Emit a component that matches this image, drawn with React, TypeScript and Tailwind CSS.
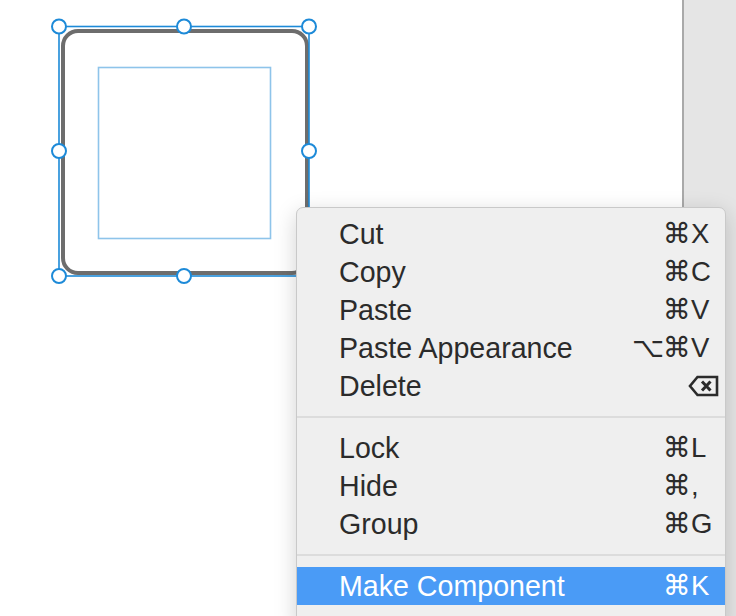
import React from "react";

type Item = { label: string; mod?: string; key?: string; del?: boolean; active?: boolean };

const groups: Item[][] = [
  [
    { label: "Cut", key: "X" },
    { label: "Copy", key: "C" },
    { label: "Paste", key: "V" },
    { label: "Paste Appearance", mod: "⌥", key: "V" },
    { label: "Delete", del: true },
  ],
  [
    { label: "Lock", key: "L" },
    { label: "Hide", key: "," },
    { label: "Group", key: "G" },
  ],
  [{ label: "Make Component", key: "K", active: true }],
];

function DeleteKey() {
  return (
    <svg width="31" height="22" viewBox="0 0 31 22" className="ml-[56px]">
      <path d="M9.5 2 H29 V20 H9.5 L2 11 Z" fill="none" stroke="#2b2b2b" strokeWidth="2.6" strokeLinejoin="miter" />
      <path d="M14 6.5 L22.5 15.5 M22.5 6.5 L14 15.5" stroke="#2b2b2b" strokeWidth="3" />
    </svg>
  );
}

function Row({ item }: { item: Item }) {
  const color = item.active ? "text-white" : "text-[#2b2b2b]";
  return (
    <div
      className={`flex h-[38px] items-center pl-[42px] ${item.active ? "bg-[#4a9bf6]" : ""} ${color}`}
    >
      <span className="w-[293px]">{item.label}</span>
      {item.del ? (
        <DeleteKey />
      ) : (
        <span className="flex items-center text-[27.5px]">
          <span className="w-[31px] pr-[2px] text-right font-['DejaVu_Sans',sans-serif] text-[28px]">{item.mod ?? ""}</span>
          <span className="font-['DejaVu_Sans',sans-serif] text-[28px]">⌘</span>
          <span>{item.key}</span>
        </span>
      )}
    </div>
  );
}

function Handles() {
  const xs = [59, 184, 309];
  const ys = [26.5, 151, 276];
  const pts: [number, number][] = [];
  ys.forEach((y, i) =>
    xs.forEach((x, j) => {
      if (!(i === 1 && j === 1)) pts.push([x, y]);
    })
  );
  return (
    <>
      {pts.map(([x, y]) => (
        <circle key={`${x}-${y}`} cx={x} cy={y} r="7" fill="#fff" stroke="#1d8ad8" strokeWidth="2" />
      ))}
    </>
  );
}

export default function App() {
  return (
    <div className="relative flex h-[616px] w-[736px] overflow-hidden bg-white font-['Liberation_Sans',Arial,sans-serif]">
      <div className="relative h-full w-[682px] bg-white">
        <svg width="682" height="616" className="block">
          <rect x="63" y="31" width="244" height="242" rx="15" fill="#fff" stroke="#6d6d6d" strokeWidth="4" />
          <rect x="98.5" y="67.5" width="172" height="171" fill="none" stroke="#8ec4ea" strokeWidth="1.6" />
          <rect x="59" y="26.5" width="250" height="249.5" fill="none" stroke="#1d8ad8" strokeWidth="1.6" />
          <Handles />
        </svg>
      </div>
      <div className="h-full w-[2px] bg-[#a9a9a9]" />
      <div className="h-full flex-1 bg-[#e5e5e5]" />

      <div className="absolute left-[296px] top-[207px] h-[420px] w-[430px] rounded-t-[7px] border border-[#c9c9c9] bg-[#efefef] pt-[7px] text-[28.6px] leading-none shadow-[0_6px_22px_rgba(0,0,0,0.18)]">
        {groups.map((g, gi) => (
          <div key={gi}>
            {gi > 0 && (
              <div className="py-[11px]">
                <div className="h-[2px] bg-[#dcdcdc]" />
              </div>
            )}
            {g.map((item) => (
              <Row key={item.label} item={item} />
            ))}
          </div>
        ))}
      </div>
    </div>
  );
}
